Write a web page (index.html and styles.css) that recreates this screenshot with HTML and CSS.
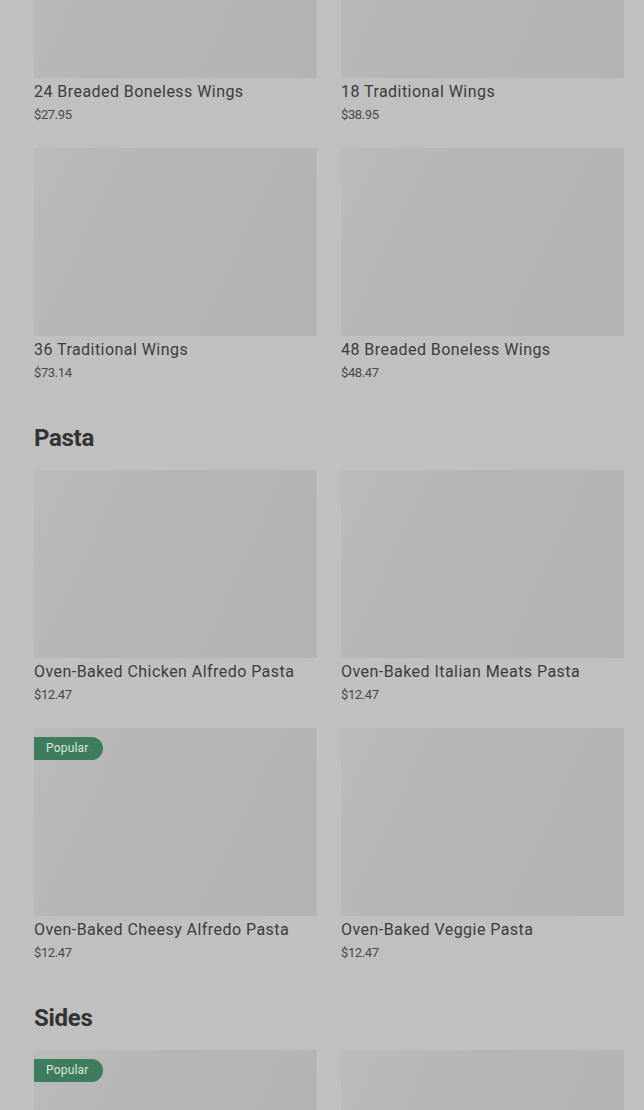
FILE: index.html
```html
<!DOCTYPE html>
<html lang="en">
<head>
    <meta charset="UTF-8">
    <meta name="viewport" content="width=device-width, initial-scale=1.0">
    <title>Menu</title>
    <link rel="stylesheet" href="styles.css">
</head>
<body>
    <main class="menu">
        <section class="section first">
            <div class="grid">
                <div class="item">
                    <div class="photo"></div>
                    <div class="name">24 Breaded Boneless Wings</div>
                    <div class="price">$27.95</div>
                </div>
                <div class="item">
                    <div class="photo"></div>
                    <div class="name">18 Traditional Wings</div>
                    <div class="price">$38.95</div>
                </div>
                <div class="item">
                    <div class="photo"></div>
                    <div class="name">36 Traditional Wings</div>
                    <div class="price">$73.14</div>
                </div>
                <div class="item">
                    <div class="photo"></div>
                    <div class="name">48 Breaded Boneless Wings</div>
                    <div class="price">$48.47</div>
                </div>
            </div>
        </section>

        <section class="section">
            <h2>Pasta</h2>
            <div class="grid">
                <div class="item">
                    <div class="photo"></div>
                    <div class="name">Oven-Baked Chicken Alfredo Pasta</div>
                    <div class="price">$12.47</div>
                </div>
                <div class="item">
                    <div class="photo"></div>
                    <div class="name">Oven-Baked Italian Meats Pasta</div>
                    <div class="price">$12.47</div>
                </div>
                <div class="item">
                    <div class="photo"><span class="badge">Popular</span></div>
                    <div class="name">Oven-Baked Cheesy Alfredo Pasta</div>
                    <div class="price">$12.47</div>
                </div>
                <div class="item">
                    <div class="photo"></div>
                    <div class="name">Oven-Baked Veggie Pasta</div>
                    <div class="price">$12.47</div>
                </div>
            </div>
        </section>

        <section class="section">
            <h2>Sides</h2>
            <div class="grid">
                <div class="item">
                    <div class="photo"><span class="badge">Popular</span></div>
                </div>
                <div class="item">
                    <div class="photo"></div>
                </div>
            </div>
        </section>
    </main>
</body>
</html>
```

FILE: styles.css
```css
html, body {
    margin: 0;
    padding: 0;
    height: 100%;
    overflow: hidden;
}
body {
    background-color: #c0c0c0;
    font-family: Roboto, "Liberation Sans", sans-serif;
    color: #3b3b3b;
}
.menu {
    padding: 0 20px 0 34px;
    margin-top: -110px;
}
.section {
    margin-top: 40px;
}
.section.first {
    margin-top: 0;
}
.section h2 {
    margin: 0 0 17px;
    font-size: 24px;
    line-height: 30px;
    font-weight: 700;
    color: #333;
    letter-spacing: -0.3px;
}
.grid {
    display: grid;
    grid-template-columns: 1fr 1fr;
    column-gap: 24px;
    row-gap: 23px;
}
.photo {
    position: relative;
    height: 188px;
    background: linear-gradient(115deg, #bbbbbb 0%, #b6b6b6 35%, #b3b3b3 100%);
}
.name {
    margin-top: 3px;
    font-size: 16px;
    line-height: 22px;
    color: #3c3c3c;
    letter-spacing: 0.45px;
    white-space: nowrap;
}
.price {
    margin-top: 2px;
    font-size: 13px;
    line-height: 20px;
    color: #484848;
    letter-spacing: -0.4px;
}
.badge {
    position: absolute;
    top: 9px;
    left: 0;
    height: 23px;
    line-height: 23px;
    padding: 0 14px 0 12px;
    background-color: #3f7c5e;
    color: #d8e6dd;
    font-size: 12px;
    letter-spacing: 0.2px;
    border-radius: 0 12px 12px 0;
}
```
